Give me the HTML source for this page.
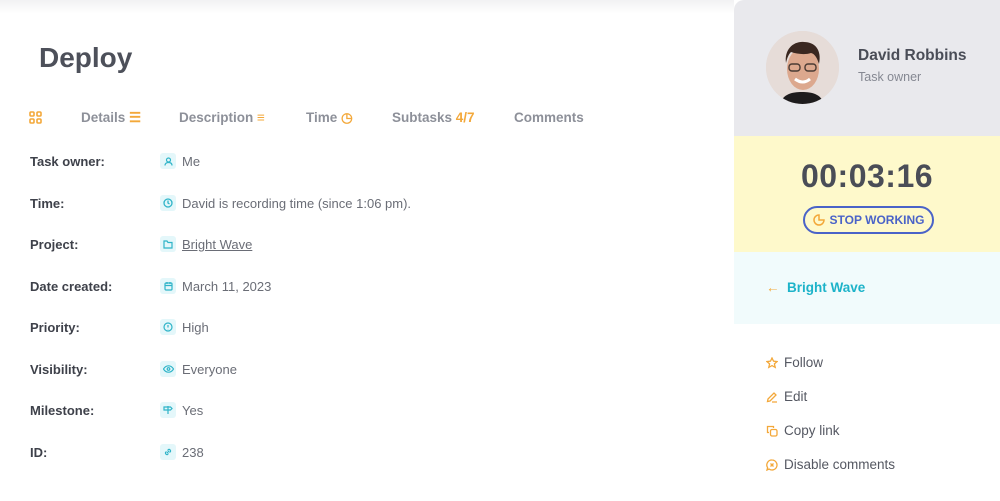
<!DOCTYPE html>
<html><head><meta charset="utf-8"><style>
*{margin:0;padding:0;box-sizing:border-box}
body{width:1000px;height:501px;background:#fff;font-family:"Liberation Sans",sans-serif;position:relative;overflow:hidden;color:#4a4d57}
.topshadow{position:absolute;left:0;top:0;width:734px;height:14px;background:linear-gradient(#f1f1f3,#fff)}
h1{position:absolute;left:39px;top:42px;font-size:28px;font-weight:bold;color:#4d505a}
.tabs{position:absolute;top:110px;left:0;font-size:13.5px;color:#8d9099;font-weight:bold}
.tabs span{position:absolute;white-space:nowrap}
.o{color:#f3a83a}
.row{position:absolute;left:30px;font-size:13px;height:18px;line-height:18px}
.lab{position:absolute;left:0;font-weight:bold;color:#3e414a;white-space:nowrap}
.ic{position:absolute;left:130px;top:0;width:16px;height:16px;border-radius:3px;background:#e4f7fa;display:flex;align-items:center;justify-content:center}
.val{position:absolute;left:152px;color:#6a6d76;white-space:nowrap}
.panel{position:absolute;left:734px;top:0;width:266px;height:501px;border-radius:10px 0 0 0;overflow:hidden}
.p1{height:136px;background:#e9e9ed;position:relative}
.p2{height:116px;background:#fef9cb;position:relative}
.p3{height:72px;background:#f1fbfc;position:relative}
.av{position:absolute;left:32px;top:31px;width:73px;height:73px;border-radius:50%;background:#e4dcd8;overflow:hidden}
.act{position:absolute;left:32px;font-size:13.5px;color:#555862;display:flex;align-items:center;gap:6px}
</style></head><body>
<div class="topshadow"></div>
<h1>Deploy</h1>
<div class="tabs">
<span style="left:29px;top:1px"><svg width="13" height="13" viewBox="0 0 13 13" fill="none" stroke="#f3a83a" stroke-width="1.6"><rect x="1" y="1" width="4" height="4" rx="1"/><rect x="8" y="1" width="4" height="4" rx="1"/><rect x="1" y="8" width="4" height="4" rx="1"/><rect x="8" y="8" width="4" height="4" rx="1"/></svg></span>
<span style="left:81px">Details <span class="o" style="position:static">☰</span></span>
<span style="left:179px">Description <span class="o" style="position:static">≡</span></span>
<span style="left:306px">Time <span class="o" style="position:static">◷</span></span>
<span style="left:392px">Subtasks <span class="o" style="position:static">4/7</span></span>
<span style="left:514px">Comments</span>
</div>
<div class="row" style="top:153px"><span class="lab">Task owner:</span><span class="ic"><svg width="9" height="9" viewBox="0 0 9 9" fill="none" stroke="#2fb4c8" stroke-width="1.2"><circle cx="4.5" cy="3" r="2"/><path d="M1 8.5c0-2 1.5-3 3.5-3s3.5 1 3.5 3"/></svg></span><span class="val">Me</span></div>
<div class="row" style="top:195px"><span class="lab">Time:</span><span class="ic"><svg width="10" height="10" viewBox="0 0 10 10" fill="none" stroke="#2fb4c8" stroke-width="1.3"><circle cx="5" cy="5" r="4"/><path d="M5 2.5V5l1.5 1"/></svg></span><span class="val">David is recording time (since 1:06 pm).</span></div>
<div class="row" style="top:236px"><span class="lab">Project:</span><span class="ic"><svg width="10" height="9" viewBox="0 0 10 9" fill="none" stroke="#2fb4c8" stroke-width="1.2"><path d="M1 1h3l1 1.5h4v5.5H1z"/></svg></span><span class="val" style="text-decoration:underline">Bright Wave</span></div>
<div class="row" style="top:278px"><span class="lab">Date created:</span><span class="ic"><svg width="9" height="10" viewBox="0 0 9 10" fill="none" stroke="#2fb4c8" stroke-width="1.2"><rect x="1" y="2" width="7" height="7" rx="1"/><path d="M1 4.5h7M3 1v2M6 1v2"/></svg></span><span class="val">March 11, 2023</span></div>
<div class="row" style="top:319px"><span class="lab">Priority:</span><span class="ic"><svg width="10" height="10" viewBox="0 0 10 10" fill="none" stroke="#2fb4c8" stroke-width="1.2"><circle cx="5" cy="5" r="4"/><path d="M5 3v2.5M5 7v.3"/></svg></span><span class="val">High</span></div>
<div class="row" style="top:361px"><span class="lab">Visibility:</span><span class="ic"><svg width="11" height="8" viewBox="0 0 11 8" fill="none" stroke="#2fb4c8" stroke-width="1.2"><path d="M.5 4C2 1.5 4 .8 5.5.8S9 1.5 10.5 4C9 6.5 7 7.2 5.5 7.2S2 6.5.5 4z"/><circle cx="5.5" cy="4" r="1.3"/></svg></span><span class="val">Everyone</span></div>
<div class="row" style="top:402px"><span class="lab">Milestone:</span><span class="ic"><svg width="10" height="10" viewBox="0 0 10 10" fill="none" stroke="#2fb4c8" stroke-width="1.2"><path d="M5 9V1M1 2h6.5l1.5 1.5L7.5 5H1z"/></svg></span><span class="val">Yes</span></div>
<div class="row" style="top:444px"><span class="lab">ID:</span><span class="ic"><svg width="10" height="10" viewBox="0 0 10 10" fill="none" stroke="#2fb4c8" stroke-width="1.2"><path d="M4 6l2-2M3.5 4.5l-1 1a1.6 1.6 0 002 2l1-1M6.5 5.5l1-1a1.6 1.6 0 00-2-2l-1 1"/></svg></span><span class="val">238</span></div>

<div class="panel">
<div class="p1">
<div class="av"><svg width="73" height="73" viewBox="0 0 73 73"><rect width="73" height="73" fill="#e6dcd8"/><path d="M14 73c3-10 12-12 22-12s19 2 22 12z" fill="#1e1c1d"/><ellipse cx="37" cy="38" rx="16" ry="21" fill="#dca88e"/><path d="M20 32c-2-14 8-22 18-21 11 0 18 8 15 22-2-6-4-10-8-11-6 2-14 1-20-1-3 3-4 7-5 11z" fill="#3a2720"/><rect x="23" y="33" width="11" height="7" rx="3" fill="none" stroke="#4a3a33" stroke-width="1.4"/><rect x="39" y="33" width="11" height="7" rx="3" fill="none" stroke="#4a3a33" stroke-width="1.4"/><path d="M29 48q8 6 15 0" stroke="#fff" stroke-width="3" fill="none"/></svg></div>
<div style="position:absolute;left:124px;top:47px;font-size:15.5px;font-weight:bold;color:#4a4d57">David Robbins</div>
<div style="position:absolute;left:124px;top:70px;font-size:12.5px;color:#858892">Task owner</div>
</div>
<div class="p2">
<div style="position:absolute;left:0;width:266px;text-align:center;top:22px;font-size:32px;font-weight:bold;color:#4a4d57;letter-spacing:0.5px">00:03:16</div>
<div style="position:absolute;left:69px;top:70px;width:131px;height:28px;border:2px solid #4a63c8;border-radius:14px;display:flex;align-items:center;justify-content:center;gap:5px;font-size:12px;font-weight:bold;color:#4a63c8"><svg width="12" height="12" viewBox="0 0 12 12" fill="none" stroke="#f3a83a" stroke-width="1.5"><path d="M6 1a5 5 0 105 5H6z"/></svg>STOP WORKING</div>
</div>
<div class="p3">
<div style="position:absolute;left:32px;top:28px;font-size:13.5px;font-weight:bold;color:#1db3c9"><span style="color:#f3a83a">←</span>&nbsp; Bright Wave</div>
</div>
<div class="act" style="top:355px"><svg width="12" height="12" viewBox="0 0 12 12" fill="none" stroke="#f3a83a" stroke-width="1.3"><path d="M6 1l1.5 3.2 3.5.4-2.6 2.3.8 3.5L6 8.6 2.8 10.4l.8-3.5L1 4.6l3.5-.4z"/></svg>Follow</div>
<div class="act" style="top:389px"><svg width="12" height="12" viewBox="0 0 12 12" fill="none" stroke="#f3a83a" stroke-width="1.3"><path d="M1.5 10.5l.5-2.5 6-6 2 2-6 6zM6 11h5"/></svg>Edit</div>
<div class="act" style="top:423px"><svg width="12" height="12" viewBox="0 0 12 12" fill="none" stroke="#f3a83a" stroke-width="1.3"><rect x="4.5" y="4.5" width="6.5" height="6.5" rx="1.5"/><path d="M3 7.5H1.5V1.5h6V3"/></svg>Copy link</div>
<div class="act" style="top:457px"><svg width="12" height="12" viewBox="0 0 12 12" fill="none" stroke="#f3a83a" stroke-width="1.3"><path d="M6 1a5 5 0 11-3 9l-2 1 .6-2.3A5 5 0 016 1z"/><path d="M4.5 4.5l3 3M7.5 4.5l-3 3"/></svg>Disable comments</div>
</div>
</body></html>
